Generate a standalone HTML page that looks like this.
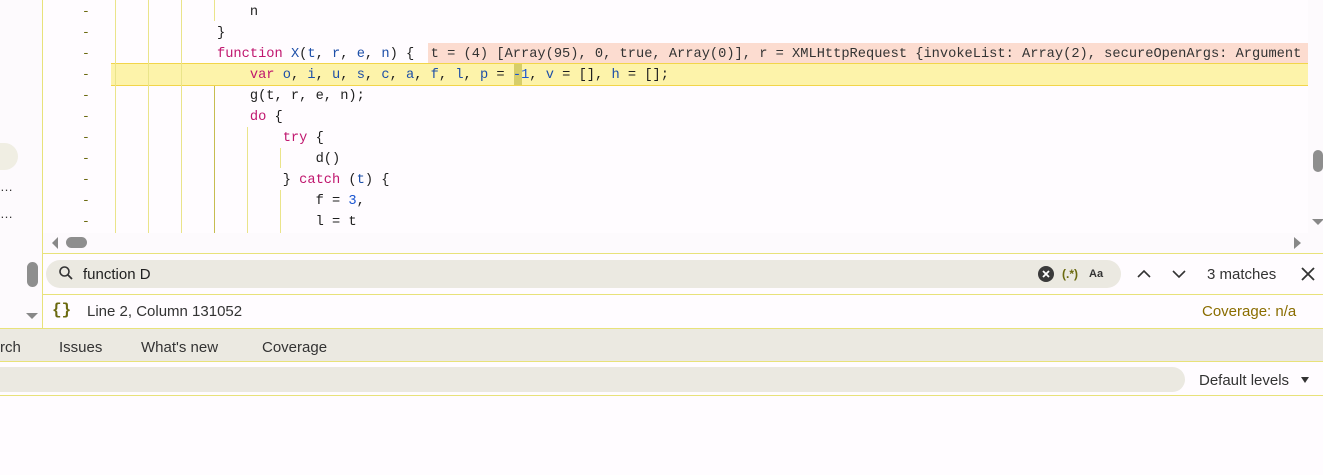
<!DOCTYPE html>
<html><head><meta charset="utf-8"><style>
*{margin:0;padding:0;box-sizing:border-box}
body{width:1323px;height:475px;background:#fffcff;position:relative;overflow:hidden;font-family:"Liberation Sans",sans-serif}
.a{position:absolute}
.code{font-family:"Liberation Mono",monospace;font-size:13.7px;line-height:21px;color:#1f1f1f;white-space:pre}
.k{color:#c0166e}.v{color:#1d4fa8}.n{color:#1a55d0}
.vl{position:absolute;width:1px;background:#eae48a}
</style></head><body>
<div class="a" style="left:0;top:0;width:42px;height:328px;background:#fdfafd"></div>
<div class="a" style="left:-20px;top:143px;width:38px;height:27px;border-radius:14px;background:#f0eee3"></div>
<div class="a" style="left:0;top:179px;font-size:13px;color:#333">…</div>
<div class="a" style="left:0;top:206px;font-size:13px;color:#333">…</div>
<div class="a" style="left:27px;top:262px;width:11px;height:25px;border-radius:6px;background:#8e8e8e"></div>
<div class="a" style="left:26px;top:313px;width:0;height:0;border-left:6px solid transparent;border-right:6px solid transparent;border-top:6px solid #888"></div>
<div class="a" style="left:42px;top:0;width:1px;height:328px;background:#e8e27a"></div>

<div class="a" style="left:111px;top:63px;width:1197px;height:23px;background:#fdf3aa;border-top:1px solid #f2d54a;border-bottom:1px solid #f2d54a"></div>
<div class="a" style="left:428px;top:43px;width:880px;height:20px;background:#fcdcd0"></div>
<div class="a" style="left:514px;top:64px;width:8px;height:21px;background:#d6cd6a"></div>

<div class="vl" style="left:115px;top:0;height:233px"></div>
<div class="vl" style="left:148px;top:0;height:233px"></div>
<div class="vl" style="left:181px;top:0;height:233px"></div>
<div class="vl" style="left:214px;top:0;height:21px"></div>
<div class="vl" style="left:214px;top:86px;height:147px;background:#c6bd50"></div>
<div class="vl" style="left:247px;top:127px;height:106px"></div>
<div class="vl" style="left:280px;top:148px;height:20px"></div>
<div class="vl" style="left:280px;top:190px;height:43px"></div>

<div class="a" style="left:82px;top:1px;font-family:'Liberation Mono',monospace;font-size:13px;line-height:21px;color:#6b6a10;white-space:pre">-
-
-
-
-
-
-
-
-
-
-</div>

<div class="a code" style="left:217px;top:2px">    n
}
<span class="k">function</span> <span class="v">X</span>(<span class="v">t</span>, <span class="v">r</span>, <span class="v">e</span>, <span class="v">n</span>) {  <span style="color:#333">t = (4) [Array(95), 0, true, Array(0)], r = XMLHttpRequest {invokeList: Array(2), secureOpenArgs: Argument</span>
    <span class="k">var</span> <span class="v">o</span>, <span class="v">i</span>, <span class="v">u</span>, <span class="v">s</span>, <span class="v">c</span>, <span class="v">a</span>, <span class="v">f</span>, <span class="v">l</span>, <span class="v">p</span> = <span class="n">-1</span>, <span class="v">v</span> = [], <span class="v">h</span> = [];
    g(t, r, e, n);
    <span class="k">do</span> {
        <span class="k">try</span> {
            d()
        } <span class="k">catch</span> (<span class="v">t</span>) {
            f = <span class="n">3</span>,
            l = t</div>

<div class="a" style="left:1308px;top:0;width:15px;height:253px;background:#fdfafd"></div>
<div class="a" style="left:1313px;top:150px;width:10px;height:22px;border-radius:5px;background:#8e8e8e"></div>
<div class="a" style="left:1312px;top:219px;border-left:6px solid transparent;border-right:6px solid transparent;border-top:6px solid #888"></div>
<div class="a" style="left:43px;top:233px;width:1265px;height:20px;background:#fdfafd"></div>
<div class="a" style="left:52px;top:237px;border-top:6px solid transparent;border-bottom:6px solid transparent;border-right:6px solid #888"></div>
<div class="a" style="left:66px;top:237px;width:21px;height:11px;border-radius:6px;background:#8e8e8e"></div>
<div class="a" style="left:1294px;top:237px;border-top:6px solid transparent;border-bottom:6px solid transparent;border-left:7px solid #888"></div>
<div class="a" style="left:43px;top:253px;width:1280px;height:1px;background:#e8e27a"></div>

<div class="a" style="left:46px;top:260px;width:1075px;height:28px;border-radius:14px;background:#ebe9e1"></div>
<svg class="a" style="left:58px;top:265px" width="16" height="16" viewBox="0 0 16 16"><circle cx="6.5" cy="6.5" r="4.5" fill="none" stroke="#333" stroke-width="1.6"/><path d="M10 10l4 4" stroke="#333" stroke-width="1.8"/></svg>
<div class="a" style="left:83px;top:266px;font-size:15px;color:#1f1f1f">function D</div>
<svg class="a" style="left:1038px;top:266px" width="16" height="16" viewBox="0 0 16 16"><circle cx="8" cy="8" r="8" fill="#3a3a3a"/><path d="M5 5l6 6M11 5l-6 6" stroke="#fff" stroke-width="1.8"/></svg>
<div class="a" style="left:1062px;top:267px;font-size:12px;font-weight:bold;color:#6b6a10">(.*)</div>
<div class="a" style="left:1089px;top:268px;font-size:11px;font-weight:bold;color:#333">Aa</div>
<svg class="a" style="left:1136px;top:267px" width="16" height="14" viewBox="0 0 16 14"><path d="M2 10l6-6 6 6" fill="none" stroke="#333" stroke-width="1.6"/></svg>
<svg class="a" style="left:1171px;top:267px" width="16" height="14" viewBox="0 0 16 14"><path d="M2 4l6 6 6-6" fill="none" stroke="#333" stroke-width="1.6"/></svg>
<div class="a" style="left:1207px;top:266px;font-size:15px;color:#333">3 matches</div>
<svg class="a" style="left:1300px;top:266px" width="16" height="16" viewBox="0 0 16 16"><path d="M2 2l12 12M14 2L2 14" stroke="#333" stroke-width="1.8"/></svg>
<div class="a" style="left:43px;top:294px;width:1280px;height:1px;background:#e8e27a"></div>

<div class="a" style="left:52px;top:301px;font-family:'Liberation Mono',monospace;font-size:16px;font-weight:bold;color:#6b6a10">{}</div>
<div class="a" style="left:87px;top:303px;font-size:15px;color:#333">Line 2, Column 131052</div>
<div class="a" style="left:1202px;top:303px;font-size:15px;color:#8a6d00">Coverage: n/a</div>

<div class="a" style="left:0;top:328px;width:1323px;height:34px;background:#ebe9e1;border-top:1px solid #e8e27a;border-bottom:1px solid #e8e27a"></div>
<div class="a" style="left:0;top:339px;font-size:15px;color:#333">rch</div>
<div class="a" style="left:59px;top:339px;font-size:15px;color:#333">Issues</div>
<div class="a" style="left:141px;top:339px;font-size:15px;color:#333">What's new</div>
<div class="a" style="left:262px;top:339px;font-size:15px;color:#333">Coverage</div>

<div class="a" style="left:-20px;top:367px;width:1205px;height:25px;border-radius:13px;background:#ebe9e1"></div>
<div class="a" style="left:1199px;top:372px;font-size:15px;color:#333">Default levels</div>
<div class="a" style="left:1301px;top:377px;border-left:4px solid transparent;border-right:4px solid transparent;border-top:6px solid #333"></div>
<div class="a" style="left:0;top:395px;width:1323px;height:1px;background:#e8e27a"></div>
</body></html>
